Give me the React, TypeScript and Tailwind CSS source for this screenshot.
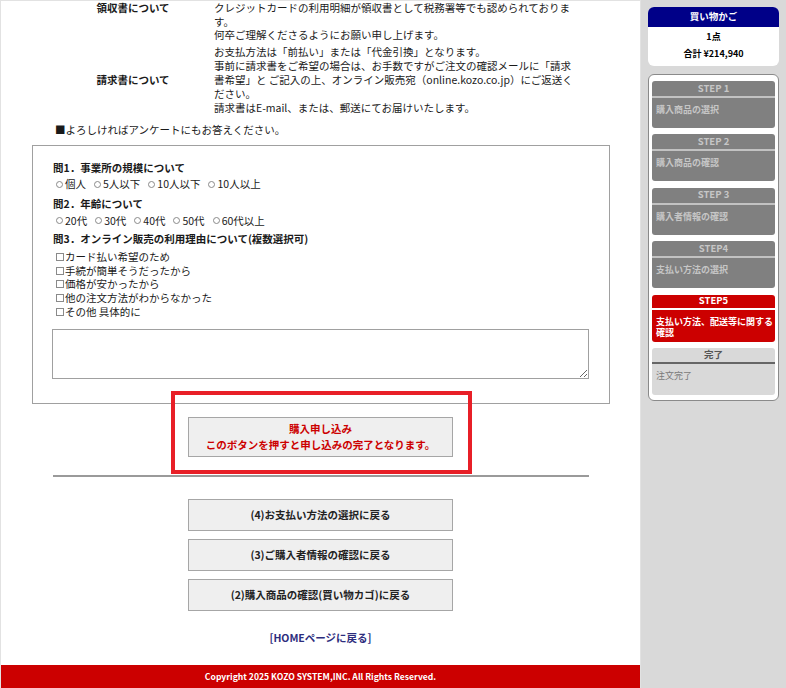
import type * as React from "react";

type StepVariant = "done" | "current" | "final";

interface StepProps {
  title: string;
  body: string;
  variant: StepVariant;
}

function Step({ title, body, variant }: StepProps): React.JSX.Element {
  if (variant === "current") {
    return (
      <div className="h-[47px] overflow-hidden rounded-[3px] bg-[#cc0000] text-white">
        <div className="flex h-[13px] items-center justify-center text-[9.5px] font-bold">{title}</div>
        <div className="h-[2px] bg-white" />
        <div className="pl-[4px] pt-[6px] text-[9px] leading-[11.5px] font-bold">{body}</div>
      </div>
    );
  }
  if (variant === "final") {
    return (
      <div className="h-[47px] overflow-hidden rounded-[3px] bg-[#d9d9d9]">
        <div className="flex h-[14px] items-center justify-center text-[9.5px] font-bold text-[#555]">{title}</div>
        <div className="h-[2px] bg-[#666]" />
        <div className="pl-[4px] pt-[6px] text-[9px] leading-[11.5px] text-[#7a7a7a]">{body}</div>
      </div>
    );
  }
  return (
    <div className="h-[47px] overflow-hidden rounded-[3px] bg-[#808080] text-[#c6c6c6]">
      <div className="flex h-[15px] items-center justify-center text-[9.5px] font-bold">{title}</div>
      <div className="h-[2px] bg-[#c2c2c2]" />
      <div className="pl-[4px] pt-[6px] text-[9px] leading-[11.5px] font-bold">{body}</div>
    </div>
  );
}

function Radio({ label }: { label: string }): React.JSX.Element {
  return (
    <span className="mr-[5px] inline-flex items-center">
      <span className="ml-[3px] mr-[2px] inline-block h-[7px] w-[7px] rounded-full border border-[#8a8a8a]" />
      {label}
    </span>
  );
}

function Check({ label }: { label: string }): React.JSX.Element {
  return (
    <div className="flex items-center">
      <span className="ml-[3px] mr-[1px] inline-block h-[8px] w-[8px] border border-[#8a8a8a]" />
      {label}
    </div>
  );
}

const backButtons = [
  "(4)お支払い方法の選択に戻る",
  "(3)ご購入者情報の確認に戻る",
  "(2)購入商品の確認(買い物カゴ)に戻る",
];

const steps: StepProps[] = [
  { title: "STEP 1", body: "購入商品の選択", variant: "done" },
  { title: "STEP 2", body: "購入商品の確認", variant: "done" },
  { title: "STEP 3", body: "購入者情報の確認", variant: "done" },
  { title: "STEP4", body: "支払い方法の選択", variant: "done" },
  { title: "STEP5", body: "支払い方法、配送等に関する確認", variant: "current" },
  { title: "完了", body: "注文完了", variant: "final" },
];

export default function App(): React.JSX.Element {
  return (
    <div className="flex h-[688px] w-[786px] overflow-hidden bg-[#d9d9d9] font-['Noto_Sans_CJK_JP',sans-serif] text-[10.5px] leading-[13.7px] text-[#1a1a1a]">
      <main className="flex w-[641px] shrink-0 flex-col border-l border-r border-t border-[#e2e2e2] bg-white">
        {/* 領収書 / 請求書 */}
        <div className="ml-[54px]">
          <div className="flex">
            <div className="w-[156px] text-center font-bold">領収書について</div>
            <div className="ml-[3px] w-[362px]">
              <p>クレジットカードの利用明細が領収書として税務署等でも認められております。</p>
              <p>何卒ご理解くださるようにお願い申し上げます。</p>
            </div>
          </div>
          <div className="mt-[2.75px] flex items-center leading-[14px]">
            <div className="w-[156px] text-center font-bold">請求書について</div>
            <div className="ml-[3px] w-[362px]">
              <p>お支払方法は「前払い」または「代金引換」となります。</p>
              <p>
                事前に請求書をご希望の場合は、お手数ですがご注文の確認メールに「請求書希望」と ご記入の上、オンライン販売宛（online.kozo.co.jp）にご返送ください。
              </p>
              <p>請求書はE-mail、または、郵送にてお届けいたします。</p>
            </div>
          </div>
        </div>

        <p className="ml-[54px] mt-[8px]">■よろしければアンケートにもお答えください。</p>

        {/* アンケート */}
        <div className="ml-[31px] mt-[8px] w-[578px] border border-[#a0a0a0] px-[20px] pb-[24px] pt-[15px]">
          <div className="font-bold">問1．事業所の規模について</div>
          <div className="mt-[3px] flex">
            <Radio label="個人" />
            <Radio label="5人以下" />
            <Radio label="10人以下" />
            <Radio label="10人以上" />
          </div>
          <div className="mt-[6px] font-bold">問2．年齢について</div>
          <div className="mt-[3px] flex">
            <Radio label="20代" />
            <Radio label="30代" />
            <Radio label="40代" />
            <Radio label="50代" />
            <Radio label="60代以上" />
          </div>
          <div className="mt-[5px] font-bold">問3．オンライン販売の利用理由について(複数選択可)</div>
          <div className="mt-[4px]">
            <Check label="カード払い希望のため" />
            <Check label="手続が簡単そうだったから" />
            <Check label="価格が安かったから" />
            <Check label="他の注文方法がわからなかった" />
            <Check label="その他 具体的に" />
          </div>
          <textarea className="-ml-px mt-[10px] block h-[50px] w-[537px] border border-[#a0a0a0] bg-white" />
        </div>

        {/* 購入申し込み */}
        <div className="relative ml-[187px] mt-[13px] w-[265px]">
          <button className="flex h-[40px] w-[265px] flex-col items-center justify-center border border-[#a6a6a6] bg-[#efefef] text-[10.5px] leading-[16px] font-bold text-[#cc0000]">
            <span>購入申し込み</span>
            <span>このボタンを押すと申し込みの完了となります。</span>
          </button>
          <div className="pointer-events-none absolute -bottom-[17px] -left-[17px] -right-[19px] -top-[26px] border-[4.5px] border-[#e81f27]" />
        </div>

        <div className="ml-[52px] mt-[18.5px] h-[2px] w-[536px] bg-[#9a9a9a]" />

        <div className="ml-[187px] mt-[22px] flex w-[265px] flex-col gap-[8px]">
          {backButtons.map((label) => (
            <button
              key={label}
              className="h-[32px] w-[265px] border border-[#a6a6a6] bg-[#efefef] text-[10.5px] font-bold text-[#222]"
            >
              {label}
            </button>
          ))}
        </div>

        <div className="mt-[20px] text-center font-bold text-[#2d2d7d]">[HOMEページに戻る]</div>

        <footer className="mt-auto flex h-[23px] items-center justify-center bg-[#cc0000] text-[8.6px] font-bold text-white">
          Copyright 2025 KOZO SYSTEM,INC. All Rights Reserved.
        </footer>
      </main>

      <aside className="flex-1 px-[7px] pt-[7px]">
        <div className="overflow-hidden rounded-[6px] bg-white">
          <div className="flex h-[20px] items-center justify-center bg-[#000088] text-[9.5px] font-bold text-white">
            買い物かご
          </div>
          <div className="h-[39px] pt-[1.5px] text-[9px] font-bold text-black">
            <div className="flex h-[17px] items-center justify-center">1点</div>
            <div className="flex h-[17px] items-center justify-center">合計 ¥214,940</div>
          </div>
        </div>

        <div className="mt-[8px] flex flex-col gap-[6.4px] rounded-[6px] border border-[#8a8a8a] bg-white px-[3px] pb-[5px] pt-[6px]">
          {steps.map((s) => (
            <Step key={s.title} {...s} />
          ))}
        </div>
      </aside>
    </div>
  );
}
